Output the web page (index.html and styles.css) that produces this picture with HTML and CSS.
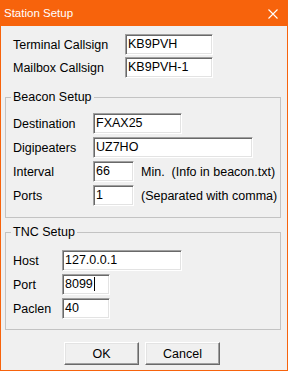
FILE: index.html
```html
<!DOCTYPE html>
<html>
<head>
<meta charset="utf-8">
<title>Station Setup</title>
<link rel="stylesheet" href="styles.css">
</head>
<body>
<div class="window">
  <div class="titlebar">
    <span class="title">Station Setup</span>
    <svg class="close" width="10" height="10" viewBox="0 0 10 10"><path d="M0.5 0.5L9.5 9.5M9.5 0.5L0.5 9.5" stroke="#fff" stroke-width="1.1" fill="none"/></svg>
  </div>
  <div class="content">
    <div class="station">
      <div class="row"><span class="label label-station">Terminal Callsign</span><span class="field w-call">KB9PVH</span></div>
      <div class="row"><span class="label label-station">Mailbox Callsign</span><span class="field w-call">KB9PVH-1</span></div>
    </div>

    <fieldset class="group beacon">
      <legend>Beacon Setup</legend>
      <div class="rows">
        <div class="row"><span class="label label-beacon">Destination</span><span class="field w-dest">FXAX25</span></div>
        <div class="row"><span class="label label-beacon">Digipeaters</span><span class="field w-digi">UZ7HO</span></div>
        <div class="row"><span class="label label-beacon">Interval</span><span class="field w-small">66</span><span class="note">Min.&nbsp; (Info in beacon.txt)</span></div>
        <div class="row row-ports"><span class="label label-beacon">Ports</span><span class="field w-small">1</span><span class="note">(Separated with comma)</span></div>
      </div>
    </fieldset>

    <fieldset class="group tnc">
      <legend>TNC Setup</legend>
      <div class="rows">
        <div class="row"><span class="label label-tnc">Host</span><span class="field w-host">127.0.0.1</span></div>
        <div class="row"><span class="label label-tnc">Port</span><span class="field w-port">8099<span class="caret"></span></span></div>
        <div class="row"><span class="label label-tnc">Paclen</span><span class="field w-port">40</span></div>
      </div>
    </fieldset>

    <div class="buttons">
      <button class="btn">OK</button>
      <button class="btn">Cancel</button>
    </div>
  </div>
</div>
</body>
</html>
```

FILE: styles.css
```css
* { box-sizing: border-box; }

body {
  margin: 0;
  font-family: "Liberation Sans", Arial, sans-serif;
  font-size: 12.5px;
  color: #000;
  background: #f0f0f0;
}

.window {
  width: 288px;
  height: 371px;
  border: 1px solid #f7630c;
  border-top: 0;
  background: #f0f0f0;
  display: flex;
  flex-direction: column;
}

.titlebar {
  height: 26px;
  flex: none;
  background: #f7630c;
  color: #fff;
  display: flex;
  align-items: center;
  justify-content: space-between;
  padding: 0 9px 0 3px;
}

.title {
  font-size: 11.5px;
  line-height: 14px;
}

.close {
  display: block;
  margin-top: 1px;
}

.content {
  padding-top: 8px;
}

.station {
  padding-left: 12px;
  display: flex;
  flex-direction: column;
  gap: 2px;
}

.row {
  display: flex;
  align-items: center;
  height: 21px;
}

.label { flex: none; white-space: nowrap; }
.label-station { width: 112px; }
.label-beacon { width: 80px; }
.label-tnc { width: 49px; }

.field {
  flex: none;
  display: block;
  height: 21px;
  background: #fff;
  border: 1px solid;
  border-color: #a0a0a0 #fff #fff #a0a0a0;
  box-shadow: inset 1px 1px #696969, inset -1px -1px #e3e3e3;
  padding-left: 2px;
  line-height: 19px;
  white-space: nowrap;
}

.w-call { width: 88px; }
.w-dest { width: 89px; }
.w-digi { width: 160px; }
.w-small { width: 41px; }
.w-host { width: 120px; }
.w-port { width: 48px; }

.caret {
  display: inline-block;
  width: 1px;
  height: 14px;
  background: #000;
  vertical-align: -3px;
  margin-left: 1px;
}

.note {
  margin-left: 7px;
  white-space: nowrap;
}

.group {
  margin: 0 0 0 4px;
  width: 276px;
  min-width: 0;
  border: 1px solid #c3c3c3;
}

.group legend {
  padding: 0 2px;
  margin-left: -2px;
  line-height: 14px;
  height: 14px;
}

.rows {
  display: flex;
  flex-direction: column;
  gap: 3px;
}

.beacon {
  margin-top: 12px;
  padding: 9px 0 11px 7px;
}

.tnc {
  margin-top: 7px;
  padding: 11px 0 10px 7px;
}

.buttons {
  display: flex;
  gap: 6px;
  padding-left: 63px;
  margin-top: 12px;
}

.btn {
  width: 75px;
  height: 23px;
  margin: 0;
  padding: 0;
  font-family: inherit;
  font-size: 12.5px;
  color: #000;
  background: #f0f0f0;
  border: 1px solid;
  border-color: #fff #696969 #696969 #fff;
  box-shadow: inset -1px -1px #a0a0a0, inset 1px 1px #e3e3e3;
}
```
